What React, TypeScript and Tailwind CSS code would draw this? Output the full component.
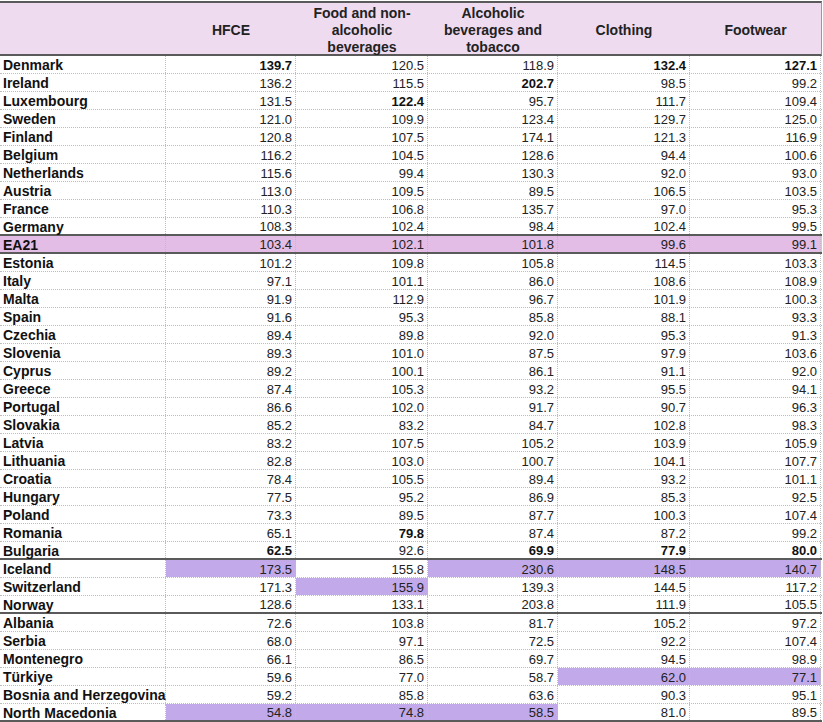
import React from 'react';

type Row = {
  name: string;
  values: string[];
  bold?: number[];
  hl?: number[];
  band?: boolean;
  sepBelow?: boolean;
};

const rows: Row[] = [
  { name: 'Denmark', values: ['139.7', '120.5', '118.9', '132.4', '127.1'], bold: [0, 3, 4] },
  { name: 'Ireland', values: ['136.2', '115.5', '202.7', '98.5', '99.2'], bold: [2] },
  { name: 'Luxembourg', values: ['131.5', '122.4', '95.7', '111.7', '109.4'], bold: [1] },
  { name: 'Sweden', values: ['121.0', '109.9', '123.4', '129.7', '125.0'] },
  { name: 'Finland', values: ['120.8', '107.5', '174.1', '121.3', '116.9'] },
  { name: 'Belgium', values: ['116.2', '104.5', '128.6', '94.4', '100.6'] },
  { name: 'Netherlands', values: ['115.6', '99.4', '130.3', '92.0', '93.0'] },
  { name: 'Austria', values: ['113.0', '109.5', '89.5', '106.5', '103.5'] },
  { name: 'France', values: ['110.3', '106.8', '135.7', '97.0', '95.3'] },
  { name: 'Germany', values: ['108.3', '102.4', '98.4', '102.4', '99.5'], sepBelow: true },
  { name: 'EA21', values: ['103.4', '102.1', '101.8', '99.6', '99.1'], band: true, sepBelow: true },
  { name: 'Estonia', values: ['101.2', '109.8', '105.8', '114.5', '103.3'] },
  { name: 'Italy', values: ['97.1', '101.1', '86.0', '108.6', '108.9'] },
  { name: 'Malta', values: ['91.9', '112.9', '96.7', '101.9', '100.3'] },
  { name: 'Spain', values: ['91.6', '95.3', '85.8', '88.1', '93.3'] },
  { name: 'Czechia', values: ['89.4', '89.8', '92.0', '95.3', '91.3'] },
  { name: 'Slovenia', values: ['89.3', '101.0', '87.5', '97.9', '103.6'] },
  { name: 'Cyprus', values: ['89.2', '100.1', '86.1', '91.1', '92.0'] },
  { name: 'Greece', values: ['87.4', '105.3', '93.2', '95.5', '94.1'] },
  { name: 'Portugal', values: ['86.6', '102.0', '91.7', '90.7', '96.3'] },
  { name: 'Slovakia', values: ['85.2', '83.2', '84.7', '102.8', '98.3'] },
  { name: 'Latvia', values: ['83.2', '107.5', '105.2', '103.9', '105.9'] },
  { name: 'Lithuania', values: ['82.8', '103.0', '100.7', '104.1', '107.7'] },
  { name: 'Croatia', values: ['78.4', '105.5', '89.4', '93.2', '101.1'] },
  { name: 'Hungary', values: ['77.5', '95.2', '86.9', '85.3', '92.5'] },
  { name: 'Poland', values: ['73.3', '89.5', '87.7', '100.3', '107.4'] },
  { name: 'Romania', values: ['65.1', '79.8', '87.4', '87.2', '99.2'], bold: [1] },
  { name: 'Bulgaria', values: ['62.5', '92.6', '69.9', '77.9', '80.0'], bold: [0, 2, 3, 4], sepBelow: true },
  { name: 'Iceland', values: ['173.5', '155.8', '230.6', '148.5', '140.7'], hl: [0, 2, 3, 4] },
  { name: 'Switzerland', values: ['171.3', '155.9', '139.3', '144.5', '117.2'], hl: [1] },
  { name: 'Norway', values: ['128.6', '133.1', '203.8', '111.9', '105.5'], sepBelow: true },
  { name: 'Albania', values: ['72.6', '103.8', '81.7', '105.2', '97.2'] },
  { name: 'Serbia', values: ['68.0', '97.1', '72.5', '92.2', '107.4'] },
  { name: 'Montenegro', values: ['66.1', '86.5', '69.7', '94.5', '98.9'] },
  { name: 'Türkiye', values: ['59.6', '77.0', '58.7', '62.0', '77.1'], hl: [3, 4] },
  { name: 'Bosnia and Herzegovina', values: ['59.2', '85.8', '63.6', '90.3', '95.1'] },
  { name: 'North Macedonia', values: ['54.8', '74.8', '58.5', '81.0', '89.5'], hl: [0, 1, 2], sepBelow: true },
];

const colW = ['w-[130px]', 'w-[132px]', 'w-[130px]', 'w-[132px]', 'w-[131px]'];

export default function App() {
  return (
    <div className="w-[823px] h-[722px] overflow-hidden bg-white pt-px text-[#1a1a1a]" style={{ fontFamily: '"Liberation Sans", Arial, sans-serif' }}>
      {/* header */}
      <div className="flex h-[55px] w-[822px] border-t-2 border-b-2 border-r border-t-[#5a5a5a] border-b-[#5a5a5a] border-r-[#9a9a9a] bg-[#efdbf0] pt-[4px] text-[14px] font-bold leading-[17px] text-[#222]">
        <div className="w-[166px]" />
        <div className={`${colW[0]} flex items-center justify-center`}>HFCE</div>
        <div className={`${colW[1]} flex items-center justify-center text-center`}>
          Food and non-
          <br />
          alcoholic
          <br />
          beverages
        </div>
        <div className={`${colW[2]} flex items-center justify-center text-center`}>
          Alcoholic
          <br />
          beverages and
          <br />
          tobacco
        </div>
        <div className={`${colW[3]} flex items-center justify-center`}>Clothing</div>
        <div className={`${colW[4]} flex items-center justify-center`}>Footwear</div>
      </div>

      {rows.map((r) => (
        <div
          key={r.name}
          className={`flex h-[18px] w-[822px] ${
            r.sepBelow ? 'border-b-2 border-solid border-[#5a5a5a]' : 'border-b border-dotted border-[#bdbdbd]'
          } ${r.band ? 'bg-[#e3bde5]' : ''}`}
        >
          <div className="flex w-[166px] items-center border-r border-dotted border-[#bdbdbd] pl-[3px] pt-px text-[14px] font-bold leading-none text-[#111] whitespace-nowrap">
            {r.name}
          </div>
          {r.values.map((v, i) => (
            <div
              key={i}
              className={`${colW[i]} flex items-center justify-end border-r border-dotted border-[#bdbdbd] pr-[3px] pt-px text-[13px] leading-none ${
                r.bold?.includes(i) ? 'font-bold text-[#111]' : 'text-[#222]'
              } ${r.hl?.includes(i) ? 'bg-[#c2aaea]' : ''}`}
            >
              {v}
            </div>
          ))}
        </div>
      ))}
    </div>
  );
}
